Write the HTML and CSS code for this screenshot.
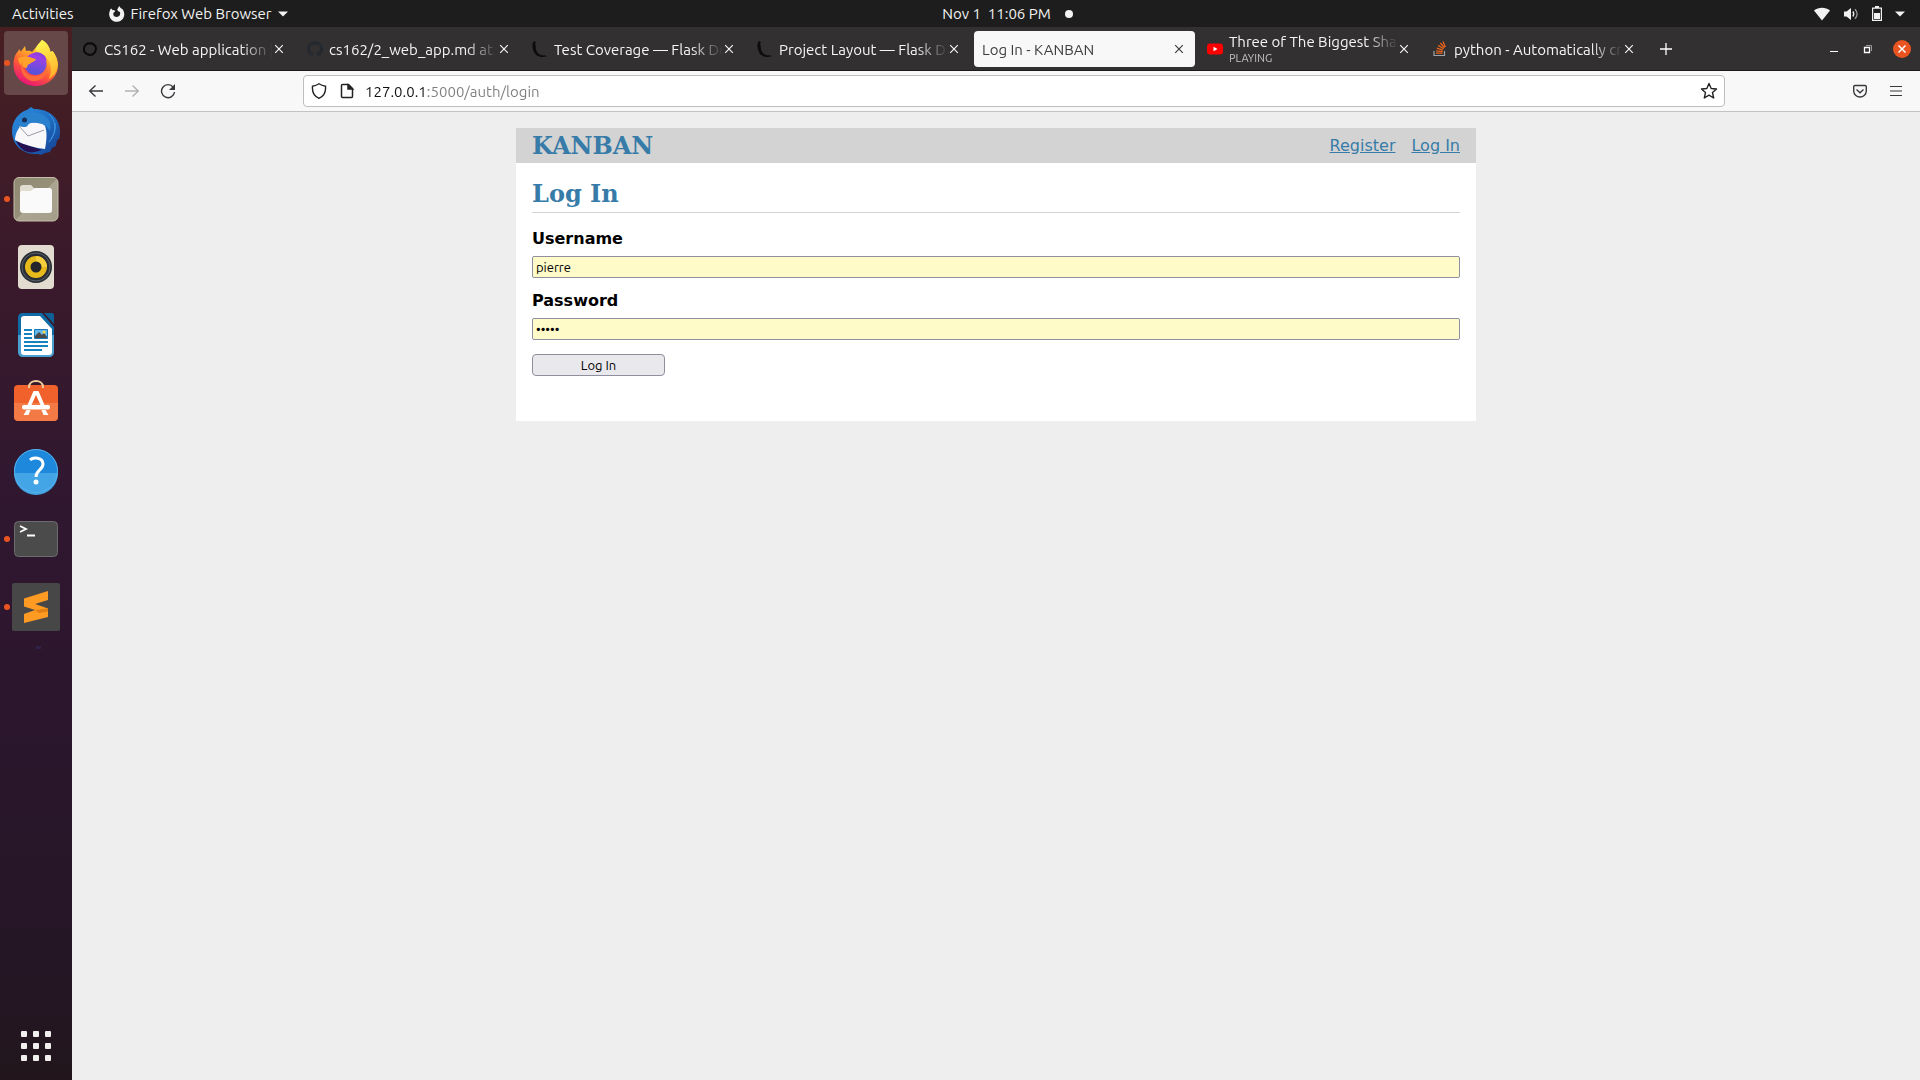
FILE: index.html
```html
<!DOCTYPE html>
<html lang="en">
<head>
<meta charset="utf-8">
<title>Log In - KANBAN</title>
<link rel="stylesheet" href="styles.css">
</head>
<body>
<svg class="defs" aria-hidden="true">
  <symbol id="close" viewBox="0 0 10 10"><path d="M1.2 1.2l7.600 7.600M8.800 1.200L1.200 8.800" fill="none" stroke="currentColor" stroke-width="1.2"/></symbol>
  <symbol id="flask" viewBox="0 0 16 16"><path d="M2 0C0 2 0 6 1.500 10c2 5 6.500 7 13 5.500l-1-1.200c-3 .5-6-.3-7.700-2.300C4 9.500 3.500 7 3.700 4L2.800 3 4 1.300z" fill="#0c0c0c"/></symbol>
</svg>

<header class="topbar">
  <div class="topbar-left">
    <button class="plain">Activities</button>
    <button class="plain app-menu">
      <svg width="16" height="16" viewBox="0 0 16 16"><path fill="#f2f2f2" d="M2.300 2.600l1.400 1.700L5.300 4l.8 1.600-1.600 1.200c-.8 1.900.6 4.200 3.400 4.200 2.500 0 3.900-2.400 3-4.900L9 5l-.8-1.500L10.300 0l1.300 1.900 2 1.300c3.200 4.200 2 11.800-5.400 12.600C2 16-1.600 9.400 1 4.400l.2-1z"/></svg>
      <span>Firefox Web Browser</span>
      <svg width="10" height="6" viewBox="0 0 10 6"><path fill="#f2f2f2" d="M0 .5h10L5 5.500z"/></svg>
    </button>
  </div>
  <button class="plain clock"><span>Nov 1&nbsp; 11:06 PM</span><i class="dot"></i></button>
  <div class="topbar-right">
    <svg width="16" height="14" viewBox="0 0 16 14"><path fill="#f2f2f2" d="M0 3.500C4.500-.2 11.500-.2 16 3.500L8 13.500z"/></svg>
    <svg width="16" height="14" viewBox="0 0 16 14"><path fill="#f2f2f2" d="M1 4.500h2.500L8 1v12L3.500 9.500H1z"/><path fill="none" stroke="#f2f2f2" stroke-width="1.300" d="M9.800 4.500c1.300 1.600 1.300 3.400 0 5"/><path fill="none" stroke="#999" stroke-width="1.300" d="M12 2.300c2.700 3 2.700 6.400 0 9.400"/></svg>
    <svg width="10" height="15" viewBox="0 0 10 15"><path fill="none" stroke="#f2f2f2" stroke-width="1.200" d="M.6 2.100h8.800v12.300H.6z"/><path fill="#f2f2f2" d="M3 0h4v2H3zM2 7h6v6H2z"/></svg>
    <svg width="10" height="6" viewBox="0 0 10 6"><path fill="#f2f2f2" d="M0 .5h10L5 5.500z"/></svg>
  </div>
</header>

<div class="desktop">
  <nav class="dock" aria-label="Applications">
    <button class="slot running active" aria-label="Firefox">
      <svg width="48" height="48" viewBox="0 0 48 48">
        <defs>
          <linearGradient id="ff1" x1=".8" y1="0" x2=".3" y2="1"><stop offset="0" stop-color="#fff44f"/><stop offset=".35" stop-color="#ffb52b"/><stop offset=".65" stop-color="#ff5a36"/><stop offset="1" stop-color="#e6127a"/></linearGradient>
          <linearGradient id="ff2" x1=".6" y1="0" x2=".4" y2="1"><stop offset="0" stop-color="#b03be8"/><stop offset="1" stop-color="#4d55d8"/></linearGradient>
          <linearGradient id="ff3" x1=".5" y1="0" x2=".7" y2="1"><stop offset="0" stop-color="#fff44f"/><stop offset="1" stop-color="#ffae2a"/></linearGradient>
        </defs>
        <path fill="url(#ff1)" d="M30 1c6 3 8 9 8.500 12l2-1c2.500 3 5.500 8 5.500 14 0 12-10 21-22.500 21S1.500 38 1.500 25.500C1.500 18 4 14 6.500 12l.5-2 2 2.500L13 7l1 5c3-.5 5 0 6 1z"/>
        <path fill="url(#ff3)" d="M30 1c6 3 8 9 8.500 12l2-1c3 4 5.500 9 5 15-1 7-5 11-9 13 4-7 3-16-2-21-4-4-9-5-11-8 1-5 4-7 6.500-10z"/>
        <circle cx="23.500" cy="25" r="11" fill="url(#ff2)"/>
        <path fill="#ffa12a" d="M6 19c5-2 10-2 14 0l4 1c-1 3-5 3-6 5-2 0-3 2-3 4-4 0-9-4-9-10z"/>
        <path fill="#ff6a3a" d="M10 22c0 10 6 16 15 15 5-1 9-5 10-10 1 9-5 15-13 15S7 34 10 22z"/>
        <path fill="#8d3fe0" d="M20 15c4-3 9-2 13 2l2 5-6-4z"/>
      </svg>
    </button>
    <button class="slot" aria-label="Thunderbird">
      <svg width="48" height="48" viewBox="0 0 48 48">
        <defs><linearGradient id="tb" x1="0" y1="0" x2="1" y2="1"><stop offset="0" stop-color="#2b8de0"/><stop offset=".5" stop-color="#1f6fc4"/><stop offset="1" stop-color="#143b8c"/></linearGradient></defs>
        <path fill="url(#tb)" d="M15 3l4-3 3 2c15 0 26 9 26 22 0 3 0 6-1 8l-2 1-1 6-4 2-2 4-5 1-4 2-3-1C12 48 0 39 0 24 0 14 7 5 15 3z"/>
        <path fill="#251052" d="M4 34l26 9-7 2C14 47 7 41 4 34z"/>
        <path fill="#f8f8fa" d="M3 33c0-6 3-11 6-15 4-2 20-4 24 1 2 6 2 12 0 23C24 41 12 38 3 33z"/>
        <path fill="none" stroke="#999ba6" stroke-width="1" d="M7 19l9 10 16-6"/>
        <path fill="#2a82cf" d="M7 19c0-5 1-9 5-11 8-4 16-4 23 3 4 4 4 9 3 13-3-5-7-8-12-8-4-2-9 0-10 2-1 3-6 2-9 1z"/>
        <circle cx="12.500" cy="13" r="2.500" fill="#173058"/>
        <path fill="none" stroke="#3b97e2" stroke-width="1" d="M37 7c7 6 8 17 2 25M43 16c1 8-2 14-6 19"/>
      </svg>
    </button>
    <button class="slot running" aria-label="Files">
      <svg width="48" height="48" viewBox="0 0 48 48">
        <defs><linearGradient id="fl" x1="0" y1="0" x2="1" y2="1"><stop offset="0" stop-color="#8f8873"/><stop offset=".5" stop-color="#979079"/><stop offset=".51" stop-color="#aca591"/><stop offset="1" stop-color="#a49d89"/></linearGradient></defs>
        <rect x="2" y="2.500" width="44" height="43.500" rx="5" fill="url(#fl)" stroke="#c4bea9"/>
        <path fill="#e0dcd0" d="M8 13c0-2 1-3 3-3h8l4 4h14v8H8z"/>
        <path fill="#fafafa" d="M8 18c0-1 1-2 2-2h9l4-3h14c2 0 3 1 3 3v19c0 2-1 3-3 3H11c-2 0-3-1-3-3z"/>
      </svg>
    </button>
    <button class="slot" aria-label="Rhythmbox">
      <svg width="48" height="48" viewBox="0 0 48 48">
        <rect x="6" y="2" width="36" height="44" rx="4" fill="#e1dccf"/>
        <circle cx="24" cy="24" r="16" fill="#292d35"/><circle cx="24" cy="24" r="14" fill="none" stroke="#5c6069" stroke-width="1"/><circle cx="24" cy="24" r="11" fill="#e7b91b"/><path d="M24 13a11 11 0 0 1 11 11H24z" fill="#f5cf3d"/><circle cx="24" cy="24" r="5.500" fill="#24242a"/>
      </svg>
    </button>
    <button class="slot" aria-label="LibreOffice Writer">
      <svg width="48" height="48" viewBox="0 0 48 48">
        <path fill="#0f6ba5" d="M10 2h20l12 14v8H6V6c0-2 2-4 4-4z"/><path fill="#4aa0d0" d="M6 24h36v17c0 3-2 5-5 5H11c-3 0-5-2-5-5z"/><path fill="#0e5f96" d="M32 2h8c1 0 2 1 2 2v9z"/>
        <path fill="#fff" d="M12 5h16l12 13v23c0 2-1 3-3 3H12c-2 0-3-1-3-3V8c0-2 1-3 3-3z"/>
        <path fill="none" stroke="#1583bd" stroke-width="2" d="M12 19h8M12 23h8M12 27h8M12 31h24M12 35h24M12 39h18"/>
        <path fill="#62b8ea" stroke="#1378b6" d="M22.500 18.500h13v9h-13z"/><path fill="#494949" d="M23 27v-2l4-4 3 3 2-2 3 4v1z"/><circle cx="32" cy="21" r="1.500" fill="#ffd34a"/>
      </svg>
    </button>
    <button class="slot" aria-label="Ubuntu Software">
      <svg width="48" height="48" viewBox="0 0 48 48">
        <path fill="none" stroke="#f0cf9f" stroke-width="2" d="M17 8c0-8 14-8 14 0"/>
        <rect x="2" y="6" width="44" height="36" rx="4" fill="#f0612c"/><path fill="#f37a45" d="M2 24h44v14c0 2-2 4-4 4H6c-2 0-4-2-4-4z"/>
        <path fill="none" stroke="#f0cf9f" stroke-width="2" d="M17 9c0-2 0-3 1-4M31 9c0-2 0-3-1-4"/>
        <path fill="#fff" d="M21.500 12h5l6 14h-4L24 16l-4.500 10h-4zM14.500 31h4l-2 5h-5zM29.500 31h4l3 5h-5z"/><rect x="10" y="26" width="28" height="4.500" rx="2" fill="#fff"/>
      </svg>
    </button>
    <button class="slot" aria-label="Help">
      <svg width="48" height="48" viewBox="0 0 48 48">
        <circle cx="24" cy="24" r="22" fill="#1e88dc"/><path fill="#43a4e6" d="M2 26h44a22 22 0 0 1-44 0z"/><circle cx="24" cy="24" r="21.500" fill="none" stroke="#55b0ea"/>
        <path fill="none" stroke="#fff" stroke-width="3" d="M18 13c3-3 13-3 13 4 0 6-7 6-7 13"/><circle cx="24" cy="35" r="2.500" fill="#fff"/>
      </svg>
    </button>
    <button class="slot running" aria-label="Terminal">
      <svg width="48" height="48" viewBox="0 0 48 48">
        <rect x="2.500" y="6.500" width="43" height="35" rx="4" fill="#4b4b4b" stroke="#6c6c6c"/>
        <path fill="none" stroke="#fff" stroke-width="1.800" d="M8 11l6 3-6 3M15 20.500h8"/>
      </svg>
    </button>
    <button class="slot running" aria-label="Sublime Text">
      <svg width="48" height="48" viewBox="0 0 48 48">
        <rect width="48" height="48" rx="2" fill="#474747"/>
        <path fill="#ff9a22" d="M36 8v9l-13 4 13 4.500V34L12 40v-9l11-4-11-3.500v-8z"/><path fill="#e07f13" d="M23 27l13-1.500v3L27 30z"/>
      </svg>
    </button>
    <i class="dock-mark"></i>
    <button class="app-grid" aria-label="Show Applications">
      <i></i><i></i><i></i><i></i><i></i><i></i><i></i><i></i><i></i>
    </button>
  </nav>

  <div class="browser">
    <div class="tabbar">
      <div class="tab">
        <svg class="favicon" viewBox="0 0 16 16"><path fill="none" stroke="#0a0a0a" stroke-width="2" d="M8 2.200l3 .5 2.500 2.500.5 3-1 3L10.500 13.500 7.500 14l-3-1L2.200 10.500 2 7.500l1-3L5.500 2.500z"/></svg>
        <span class="tab-title">CS162 - Web application |</span>
        <button class="plain tab-close" aria-label="Close tab"><svg width="10" height="10"><use href="#close"/></svg></button>
      </div>
      <div class="tab">
        <svg class="favicon" viewBox="0 0 16 16"><path fill="#24292f" d="M8 0C3.580 0 0 3.580 0 8c0 3.540 2.290 6.530 5.470 7.590.4.070.55-.17.55-.38v-1.490c-2.010.37-2.530-.49-2.690-.94-.09-.23-.48-.94-.82-1.130-.28-.15-.68-.52-.01-.53.63-.01 1.080.58 1.230.82.72 1.210 1.870.87 2.330.66.070-.52.28-.87.51-1.070-1.780-.2-3.640-.89-3.640-3.950 0-.87.31-1.590.82-2.150-.08-.2-.36-1.020.08-2.120 0 0 .67-.21 2.200.82a7.600 7.600 0 0 1 4 0c1.530-1.040 2.200-.82 2.200-.82.44 1.100.16 1.920.08 2.120.51.56.82 1.270.82 2.150 0 3.070-1.870 3.750-3.650 3.950.29.25.54.73.54 1.480v2.200c0 .21.15.46.55.38A8 8 0 0 0 8 0z"/></svg>
        <span class="tab-title">cs162/2_web_app.md at m</span>
        <button class="plain tab-close" aria-label="Close tab"><svg width="10" height="10"><use href="#close"/></svg></button>
      </div>
      <div class="tab">
        <svg class="favicon"><use href="#flask"/></svg>
        <span class="tab-title">Test Coverage — Flask Do</span>
        <button class="plain tab-close" aria-label="Close tab"><svg width="10" height="10"><use href="#close"/></svg></button>
      </div>
      <div class="tab">
        <svg class="favicon"><use href="#flask"/></svg>
        <span class="tab-title">Project Layout — Flask Do</span>
        <button class="plain tab-close" aria-label="Close tab"><svg width="10" height="10"><use href="#close"/></svg></button>
      </div>
      <div class="tab selected">
        <span class="tab-title">Log In - KANBAN</span>
        <button class="plain tab-close" aria-label="Close tab"><svg width="10" height="10"><use href="#close"/></svg></button>
      </div>
      <div class="tab">
        <svg class="favicon" viewBox="0 0 16 16"><rect y="2.500" width="16" height="11" rx="3" fill="#f00"/><path fill="#fff" d="M6.500 5.800l4 2.200-4 2.200z"/></svg>
        <span class="tab-title two-line">Three of The Biggest Shar<small>PLAYING</small></span>
        <button class="plain tab-close" aria-label="Close tab"><svg width="10" height="10"><use href="#close"/></svg></button>
      </div>
      <div class="tab">
        <svg class="favicon" viewBox="0 0 16 16"><path fill="none" stroke="#a0a4a8" stroke-width="1.200" d="M2 10v4.500h10.500V10"/><path fill="none" stroke="#e8641c" stroke-width="1.300" d="M4 12.200h6.500M4.100 9.800l6.500.8M4.800 7.200l6.200 2M6.200 4.400l5.400 3.300M8.300 2l4.200 4.800M11 .6l2.300 5.500"/></svg>
        <span class="tab-title">python - Automatically cre</span>
        <button class="plain tab-close" aria-label="Close tab"><svg width="10" height="10"><use href="#close"/></svg></button>
      </div>
      <button class="plain new-tab" aria-label="New tab"><svg width="12" height="12"><path d="M6 0v12M0 6h12" stroke="#fff" stroke-width="1.300"/></svg></button>
      <div class="window-controls">
        <button class="plain" aria-label="Minimize"><svg width="18" height="18"><path d="M5 11.500h8" stroke="#fff"/></svg></button>
        <button class="plain" aria-label="Restore"><svg width="18" height="18"><path d="M5.500 7.500h5v5h-5z" fill="none" stroke="#fff" stroke-width="1.300"/><path d="M7 5.500h5.500V11" fill="none" stroke="#999"/></svg></button>
        <button class="plain" aria-label="Close"><svg width="18" height="18"><circle cx="9" cy="9" r="9" fill="#e95420"/><path d="M5.500 5.500l7 7m0-7l-7 7" stroke="#fff" stroke-width="1.500"/></svg></button>
      </div>
    </div>

    <div class="toolbar">
      <div class="nav-buttons">
        <button class="plain" aria-label="Back"><svg width="16" height="16" fill="none" stroke="#3a3a3e" stroke-width="1.400"><path d="M15 8H1.500M7.500 2.500L1.700 8l5.800 5.500"/></svg></button>
        <button class="plain" aria-label="Forward" disabled><svg width="16" height="16" fill="none" stroke="#b2b2b4" stroke-width="1.400"><path d="M1 8h13.500M8.500 2.500L14.300 8l-5.800 5.500"/></svg></button>
        <button class="plain" aria-label="Reload"><svg width="16" height="16"><path fill="none" stroke="#3a3a3e" stroke-width="1.400" d="M13.200 4.200A6.500 6.500 0 1 0 14.500 9"/><path fill="#3a3a3e" d="M15 1v6H9z"/></svg></button>
      </div>
      <div class="spacer"></div>
      <div class="urlbar">
        <svg width="16" height="16" fill="none" stroke="#222" stroke-width="1.400"><path d="M8 .8c2 1.400 4 2 6.500 2.400C15 8.500 13.500 13 8 15.300 2.500 13 1 8.500 1.500 3.200 4 2.800 6 2.200 8 .8z"/></svg>
        <svg width="16" height="16" fill="none" stroke="#222" stroke-width="1.500"><path d="M3.500 1.500h6l4 4v8c0 .7-.4 1-1 1h-9c-.7 0-1-.4-1-1v-11c0-.6.300-1 1-1z"/><path fill="#222" d="M9 2v4h4.500z"/></svg>
        <input class="url" type="text" aria-label="Address" value="127.0.0.1:5000/auth/login">
        <button class="plain" aria-label="Bookmark"><svg width="18" height="18" fill="none" stroke="#222" stroke-width="1.400" stroke-linejoin="round"><path d="M9 1.500l2.200 5 5.300.5-4 3.600 1.200 5.400L9 13.200 4.300 16l1.200-5.400-4-3.600 5.300-.5z"/></svg></button>
      </div>
      <div class="spacer"></div>
      <div class="tool-buttons">
        <button class="plain" aria-label="Pocket"><svg width="14" height="14" fill="none" stroke="#3a3a3e" stroke-width="1.400"><path d="M2 1.500h10c.8 0 1.300.5 1.300 1.300V7a6.300 6 0 0 1-12.600 0V2.800C.7 2 1.200 1.500 2 1.500z"/><path d="M3.500 5.500L7 8.800l3.500-3.300"/></svg></button>
        <button class="plain" aria-label="Menu"><svg width="12" height="12" stroke="#3a3a3e" stroke-width="1.200"><path d="M0 1.500h12M0 6h12M0 10.500h12"/></svg></button>
      </div>
    </div>

    <div class="viewport">
      <div class="page">
        <nav class="site-nav">
          <h1>KANBAN</h1>
          <a href="#register">Register</a>
          <a href="#login">Log In</a>
        </nav>
        <section class="content">
          <h1>Log In</h1>
          <form class="login">
            <label for="username">Username</label>
            <input id="username" type="text" value="pierre">
            <label for="password">Password</label>
            <input id="password" type="password" value="abcde">
            <button type="button">Log In</button>
          </form>
        </section>
      </div>
    </div>
  </div>
</div>
</body>
</html>
```
FILE: styles.css
```css
* { box-sizing: border-box; }

body {
  margin: 0;
  min-height: 100vh;
  display: flex;
  flex-direction: column;
  font: 15px/20px Ubuntu, "Noto Sans", sans-serif;
}

svg { display: block; flex: none; }
.defs { display: none; }

.plain {
  margin: 0;
  padding: 0;
  border: 0;
  background: none;
  color: inherit;
  font: inherit;
  display: flex;
  align-items: center;
  justify-content: center;
}

/* System bar */
.topbar {
  height: 27px;
  display: grid;
  grid-template-columns: 1fr auto 1fr;
  align-items: center;
  padding: 0 15px 0 12px;
  background: #1d1d1d;
  color: #f2f2f2;
}
.topbar-left { display: flex; gap: 35px; }
.app-menu { gap: 6px; }
.clock { gap: 14px; padding-left: 98px; }
.dot { width: 8px; height: 8px; border-radius: 50%; background: #f2f2f2; }
.topbar-right { display: flex; align-items: center; justify-content: flex-end; gap: 13px; }

.desktop { flex: 1; display: flex; }

/* Application dock */
.dock {
  width: 72px;
  flex: none;
  display: flex;
  flex-direction: column;
  align-items: center;
  gap: 4px;
  padding: 4px 0 19px;
  background: linear-gradient(#481f22, #3b1a2a 20%, #301730 45%, #2b162d 65%, #251626 88%, #22161c);
}
.slot {
  position: relative;
  width: 64px;
  height: 64px;
  padding: 0;
  border: 0;
  border-radius: 4px;
  background: none;
  display: flex;
  align-items: center;
  justify-content: center;
}
.slot.active { background: #664848; }
.slot.running::before {
  content: "";
  position: absolute;
  left: 0;
  top: 29px;
  width: 6px;
  height: 6px;
  border-radius: 50%;
  background: #e95420;
}
.dock-mark { width: 5px; height: 3px; margin: 3px 0 0 5px; background: #2f2148; }
.app-grid {
  margin-top: auto;
  padding: 0;
  border: 0;
  background: none;
  display: grid;
  grid-template-columns: repeat(3, 6px);
  gap: 6px;
}
.app-grid i { height: 6px; border-radius: 1px; background: #f2f0ee; }

/* Browser window */
.browser { flex: 1; min-width: 0; display: flex; flex-direction: column; }

.tabbar {
  display: flex;
  align-items: center;
  gap: 4px;
  padding: 4px 9px 3px 2px;
  border-bottom: 1px solid #1c1b1c;
  background: #323031;
  color: #f5f5f5;
}
.tab {
  flex: 0 1 221px;
  min-width: 0;
  height: 36px;
  display: flex;
  align-items: center;
  padding: 0 10px 0 8px;
  border-radius: 4px;
}
.favicon { width: 16px; height: 16px; margin-right: 6px; }
.tab-title {
  flex: 1;
  min-width: 0;
  padding-top: 1px;
  overflow: hidden;
  white-space: nowrap;
  -webkit-mask-image: linear-gradient(to left, transparent, #000 32px);
  mask-image: linear-gradient(to left, transparent, #000 32px);
}
.two-line { padding-top: 0; line-height: 18px; }
.two-line small { display: block; font-size: 11px; line-height: 14px; color: #c4c4c4; }
.tab-close { width: 12px; height: 20px; }
.tab.selected { background: #f8f8f8; color: #3d3d3d; }
.new-tab { width: 28px; height: 28px; margin-left: 3px; }
.window-controls { display: flex; gap: 16px; margin-left: auto; }

.toolbar {
  display: flex;
  align-items: center;
  padding: 4px 10px;
  border-bottom: 1px solid #c3c3c3;
  background: #f8f8f8;
}
.nav-buttons, .tool-buttons { display: flex; gap: 8px; }
.nav-buttons button, .tool-buttons button { width: 28px; height: 28px; }
.spacer { flex: 0 1 121px; }
.urlbar {
  flex: 1;
  height: 32px;
  display: flex;
  align-items: center;
  gap: 12px;
  padding: 0 6px 0 7px;
  border: 1px solid #bebebe;
  border-radius: 4px;
  background: #fff;
}
.url {
  flex: 1;
  min-width: 0;
  height: 24px;
  margin-left: -2px;
  padding: 1px 0 0;
  border: 0;
  outline: 0;
  font: inherit;
  font-size: 15px;
  color: transparent;
  background: linear-gradient(to right, #111 63px, #7d7d7d 63px);
  -webkit-background-clip: text;
  background-clip: text;
}

/* Page shown in the browser */
.viewport { flex: 1; padding: 16px; background: #eee; }
.page {
  max-width: 960px;
  margin: 0 auto;
  background: #fff;
  font: 16px/19px "DejaVu Sans", sans-serif;
}
.page h1 {
  margin: 0;
  font: bold 24px/28px "DejaVu Serif", serif;
  color: #377ba8;
}
.page a { color: #377ba8; }
.site-nav {
  display: flex;
  align-items: center;
  gap: 16px;
  min-height: 35px;
  padding: 0 16px;
  background: lightgray;
}
.site-nav h1 { flex: 1; }
.content { padding: 17px 16px 45px; }
.content h1 { padding-bottom: 4px; border-bottom: 1px solid lightgray; }
.login { display: flex; flex-direction: column; padding-top: 16px; }
.login label { margin-bottom: 8px; font-weight: bold; }
.login input {
  height: 22px;
  margin-bottom: 13px;
  padding: 0 3px;
  border: 1px solid #8f8f9d;
  border-radius: 2px;
  background: #fffbc8;
  color: #000;
  font: 13px/18px Ubuntu, "Noto Sans", sans-serif;
}
.login button {
  width: 133px;
  height: 22px;
  margin-top: 1px;
  padding: 0;
  border: 1px solid #8f8f9d;
  border-radius: 4px;
  background: #e9e9ed;
  color: #000;
  font: 13px/18px Ubuntu, "Noto Sans", sans-serif;
}
```
